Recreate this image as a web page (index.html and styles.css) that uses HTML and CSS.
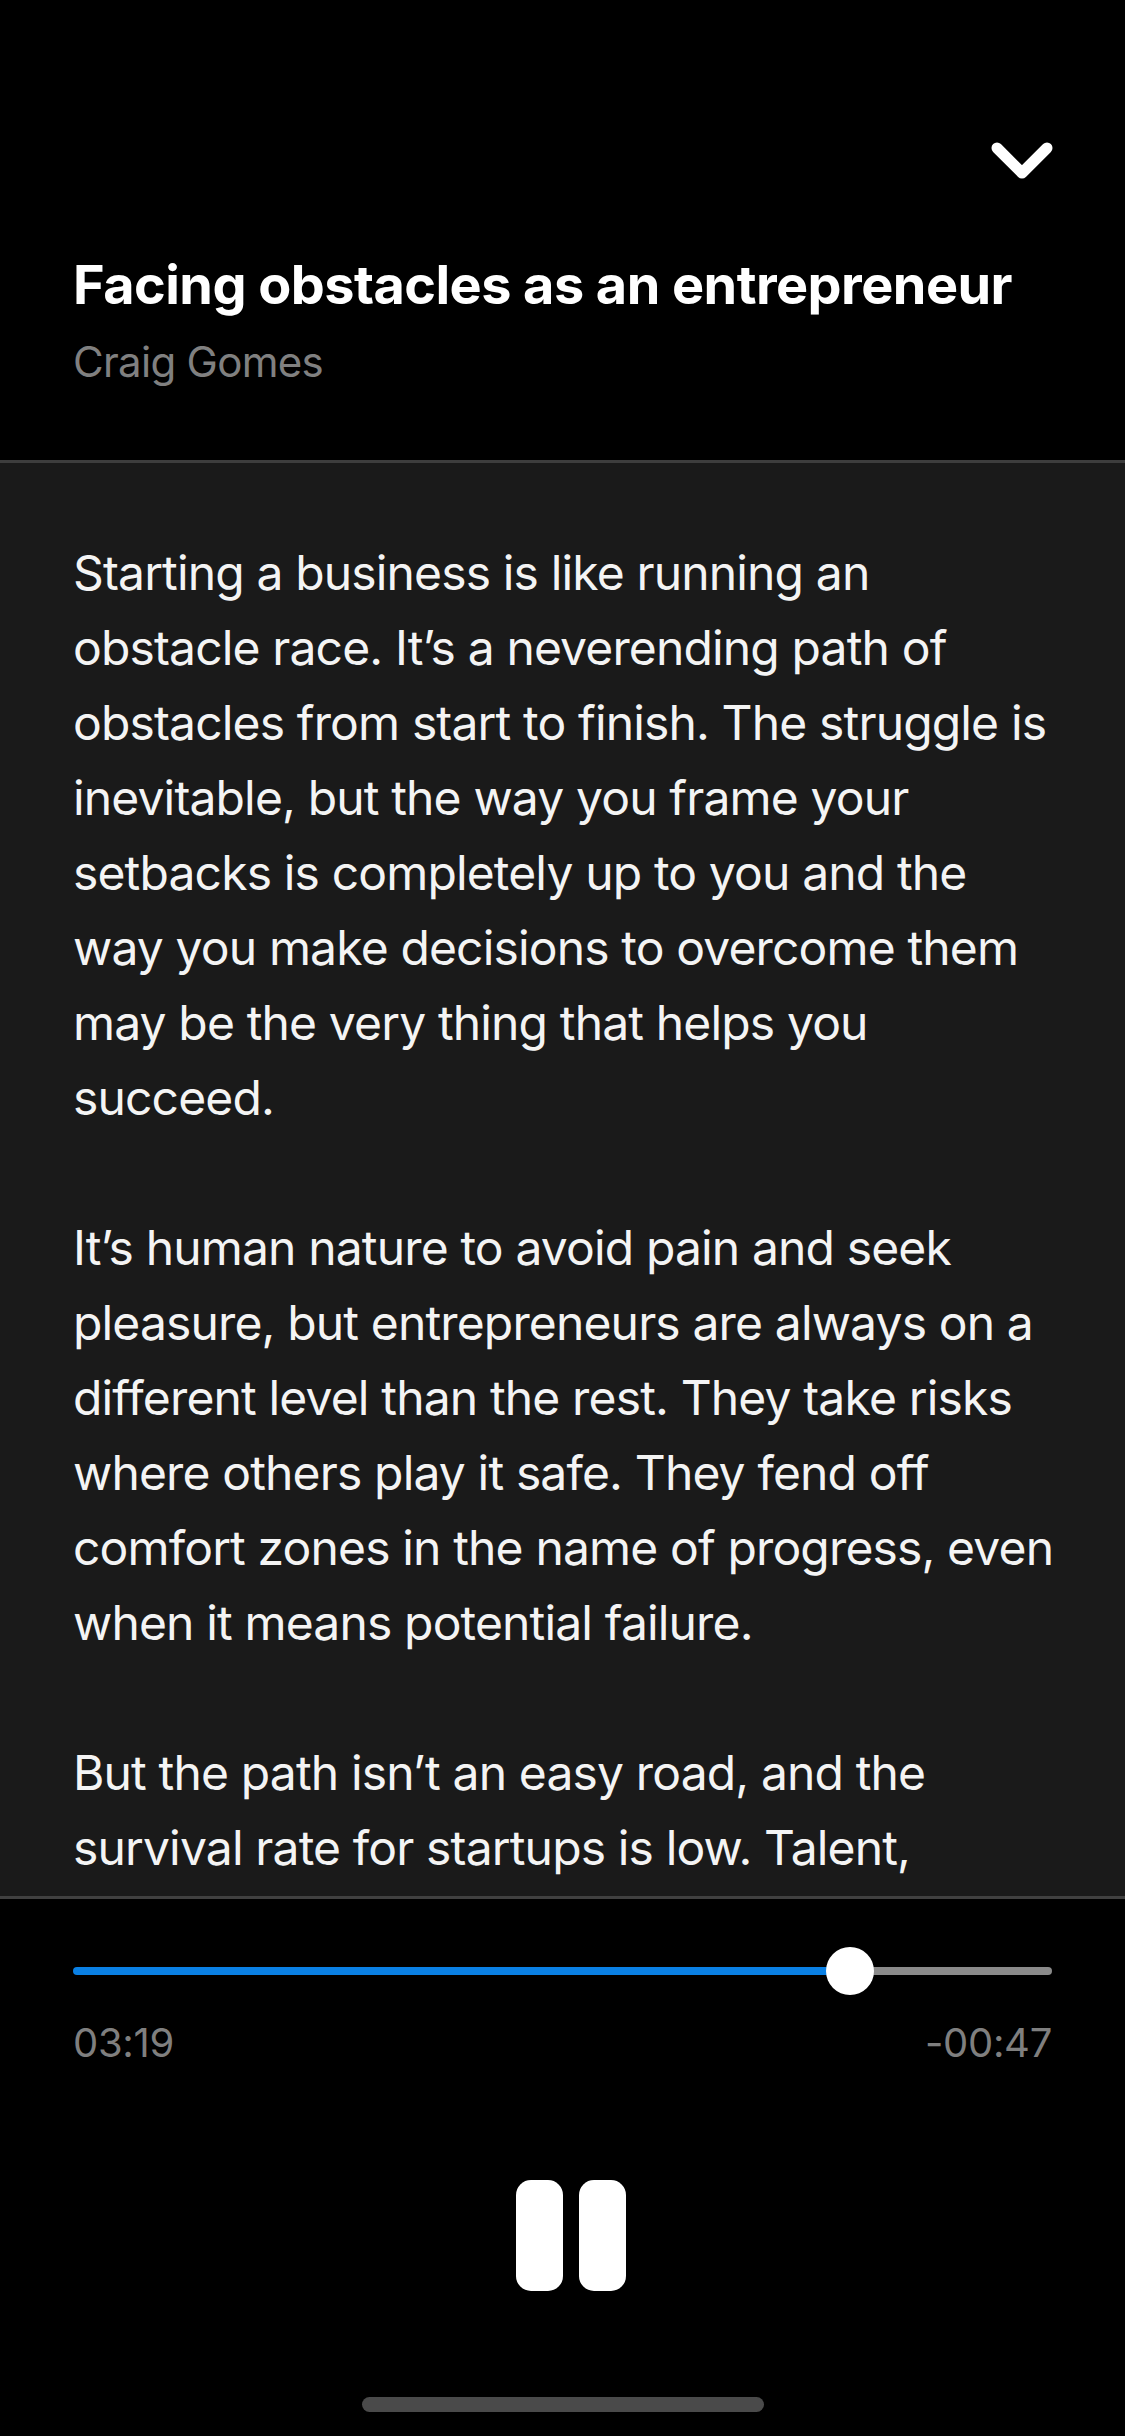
FILE: index.html
```html
<!DOCTYPE html>
<html lang="en">
<head>
<meta charset="utf-8">
<title>Facing obstacles as an entrepreneur</title>
<link rel="stylesheet" href="styles.css">
</head>
<body>
<div class="screen">
  <header class="header">
    <div class="header-top">
      <svg class="chevron" width="64" height="42" viewBox="0 0 64 42" aria-label="Close">
        <path d="M7 7 L32 32 L57 7" fill="none" stroke="#ffffff" stroke-width="11" stroke-linecap="round" stroke-linejoin="round"/>
      </svg>
    </div>
    <h1 class="title">Facing obstacles as an entrepreneur</h1>
    <p class="author">Craig Gomes</p>
  </header>

  <main class="article">
    <p class="para">Starting a business is like running an<br>obstacle race. It’s a neverending path of<br>obstacles from start to finish. The struggle is<br>inevitable, but the way you frame your<br>setbacks is completely up to you and the<br>way you make decisions to overcome them<br>may be the very thing that helps you<br>succeed.</p>
    <p class="para">It’s human nature to avoid pain and seek<br>pleasure, but entrepreneurs are always on a<br>different level than the rest. They take risks<br>where others play it safe. They fend off<br>comfort zones in the name of progress, even<br>when it means potential failure.</p>
    <p class="para">But the path isn’t an easy road, and the<br>survival rate for startups is low. Talent,</p>
  </main>

  <footer class="player">
    <div class="slider">
      <div class="track-fill" style="width: 777px"></div>
      <div class="track-rest"></div>
      <div class="thumb" style="left: 753px"></div>
    </div>
    <div class="times">
      <span>03:19</span>
      <span>-00:47</span>
    </div>
    <div class="controls">
      <button class="pause" aria-label="Pause">
        <span class="bar"></span>
        <span class="bar"></span>
      </button>
    </div>
    <div class="home-indicator"></div>
  </footer>
</div>
</body>
</html>
```

FILE: styles.css
```css
* {
  box-sizing: border-box;
}

html, body {
  margin: 0;
  padding: 0;
  background: #000000;
}

body {
  font-family: Inter, "Noto Sans", "Liberation Sans", sans-serif;
  color: #ffffff;
}

.screen {
  width: 1125px;
  height: 2436px;
  display: flex;
  flex-direction: column;
  overflow: hidden;
  background: #000000;
}

/* Header */
.header {
  height: 463px;
  padding: 141px 73px 0 73px;
  border-bottom: 3px solid #3d3d3d;
  flex-shrink: 0;
}

.header-top {
  display: flex;
  justify-content: flex-end;
  height: 42px;
  margin-right: -2px;
}

.chevron {
  display: block;
}

.title {
  margin: 70px 0 0 0;
  font-size: 54px;
  line-height: 64px;
  font-weight: 700;
  letter-spacing: -0.55px;
  color: #ffffff;
  white-space: nowrap;
}

.author {
  margin: 20px 0 0 0;
  font-size: 42px;
  line-height: 50px;
  font-weight: 400;
  letter-spacing: -0.7px;
  color: #808080;
}

/* Article */
.article {
  height: 1436px;
  flex-shrink: 0;
  background: #1a1a1a;
  padding: 72px 73px 0 73px;
  overflow: hidden;
  border-bottom: 3px solid #404040;
}

.para {
  margin: 0 0 75px 0;
  font-size: 48px;
  line-height: 75px;
  font-weight: 400;
  letter-spacing: -0.85px;
  color: #f4f4f4;
  white-space: nowrap;
}

/* Player */
.player {
  flex: 1;
  display: flex;
  flex-direction: column;
  padding: 48px 73px 0 73px;
  background: #000000;
}

.slider {
  position: relative;
  height: 48px;
  display: flex;
  align-items: center;
}

.track-fill {
  height: 8px;
  background: #0a80e4;
  border-radius: 4px 0 0 4px;
}

.track-rest {
  flex: 1;
  height: 8px;
  background: #8a8a8a;
  border-radius: 0 4px 4px 0;
}

.thumb {
  position: absolute;
  top: 0;
  width: 48px;
  height: 48px;
  border-radius: 50%;
  background: #ffffff;
}

.times {
  display: flex;
  justify-content: space-between;
  margin-top: 24px;
  font-size: 40px;
  line-height: 48px;
  letter-spacing: -0.3px;
  color: #7f7f7f;
}

.controls {
  display: flex;
  justify-content: center;
  margin-top: 113px;
  padding-left: 17px;
}

.pause {
  display: flex;
  gap: 16px;
  padding: 0;
  margin: 0;
  border: none;
  background: none;
}

.bar {
  display: block;
  width: 47px;
  height: 111px;
  border-radius: 15px;
  background: #ffffff;
}

.home-indicator {
  align-self: center;
  width: 402px;
  height: 15px;
  margin-top: 106px;
  border-radius: 8px;
  background: #4a4a4a;
}
```
